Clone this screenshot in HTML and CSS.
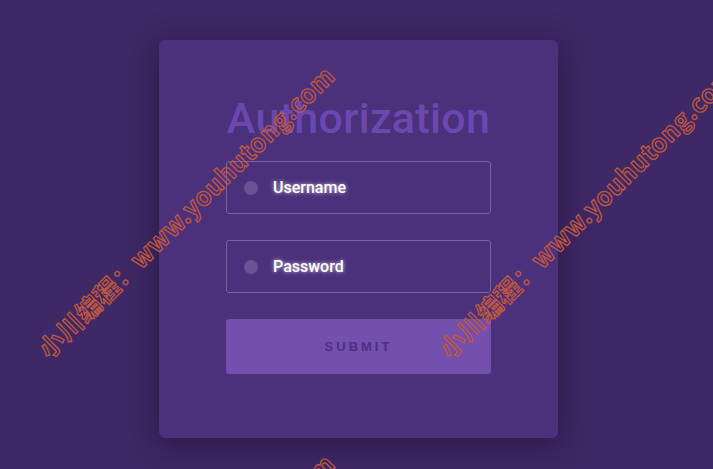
FILE: index.html
```html
<!DOCTYPE html>
<html lang="en">
<head>
    <meta charset="UTF-8">
    <meta name="viewport" content="width=device-width, initial-scale=1.0">
    <title>Authorization</title>
    <link rel="stylesheet" href="styles.css">
</head>
<body>
    <div class="card">
        <h1>Authorization</h1>
        <form class="form" onsubmit="return false">
            <label class="field">
                <span class="dot"></span>
                <span class="field-label">Username</span>
            </label>
            <label class="field">
                <span class="dot"></span>
                <span class="field-label">Password</span>
            </label>
            <button type="submit">Submit</button>
        </form>
    </div>

    <div class="watermark wm-1">小川编程：www.youhutong.com</div>
    <div class="watermark wm-2">小川编程：www.youhutong.com</div>
    <div class="watermark wm-3">小川编程：www.youhutong.com</div>
</body>
</html>
```

FILE: styles.css
```css
html, body {
    height: 100%;
}

body {
    margin: 0;
    font-family: Roboto, "Noto Sans", Arial, sans-serif;
    background-color: #3e2865;
    display: flex;
    justify-content: center;
    align-items: flex-start;
    padding-top: 40px;
    box-sizing: border-box;
    overflow: hidden;
    position: relative;
}

.card {
    width: 399px;
    height: 398px;
    box-sizing: border-box;
    margin-left: 4px;
    padding: 53px 67px 0;
    background-color: #4b307b;
    border-radius: 6px;
    box-shadow: 0 6px 30px rgba(20, 8, 40, 0.5);
}

h1 {
    margin: 0;
    text-align: center;
    font-size: 43px;
    font-weight: 500;
    color: #6b48b0;
    letter-spacing: 0.3px;
    line-height: 50px;
}

.form {
    margin-top: 18px;
    display: flex;
    flex-direction: column;
    gap: 26px;
}

.field {
    display: flex;
    align-items: center;
    height: 53px;
    box-sizing: border-box;
    border: 1px solid #7a62a3;
    border-radius: 3px;
    padding-left: 17px;
}

.dot {
    width: 14px;
    height: 14px;
    border-radius: 50%;
    background-color: #6c5195;
}

.field-label {
    margin-left: 15px;
    font-size: 16px;
    font-weight: 500;
    color: #fff;
    text-shadow: 0 0 4px rgba(255, 255, 255, 0.75);
}

button {
    height: 55px;
    border: none;
    border-radius: 3px;
    background-color: #734fae;
    color: #4b3180;
    font-family: Arial, "Liberation Sans", sans-serif;
    font-size: 13px;
    font-weight: bold;
    text-transform: uppercase;
    letter-spacing: 3px;
    cursor: pointer;
}

.watermark {
    position: absolute;
    white-space: nowrap;
    font-family: "Noto Sans CJK SC", "Noto Sans", sans-serif;
    font-size: 25px;
    font-weight: bold;
    line-height: 1;
    letter-spacing: 0.6px;
    color: transparent;
    -webkit-text-stroke: 1.3px #c0573f;
    transform-origin: 0 50%;
    transform: rotate(-44.5deg);
    pointer-events: none;
}

.wm-1 {
    left: 42px;
    top: 340px;
}

.wm-2 {
    left: 443px;
    top: 340px;
}

.wm-3 {
    left: 42px;
    top: 728px;
}
```
